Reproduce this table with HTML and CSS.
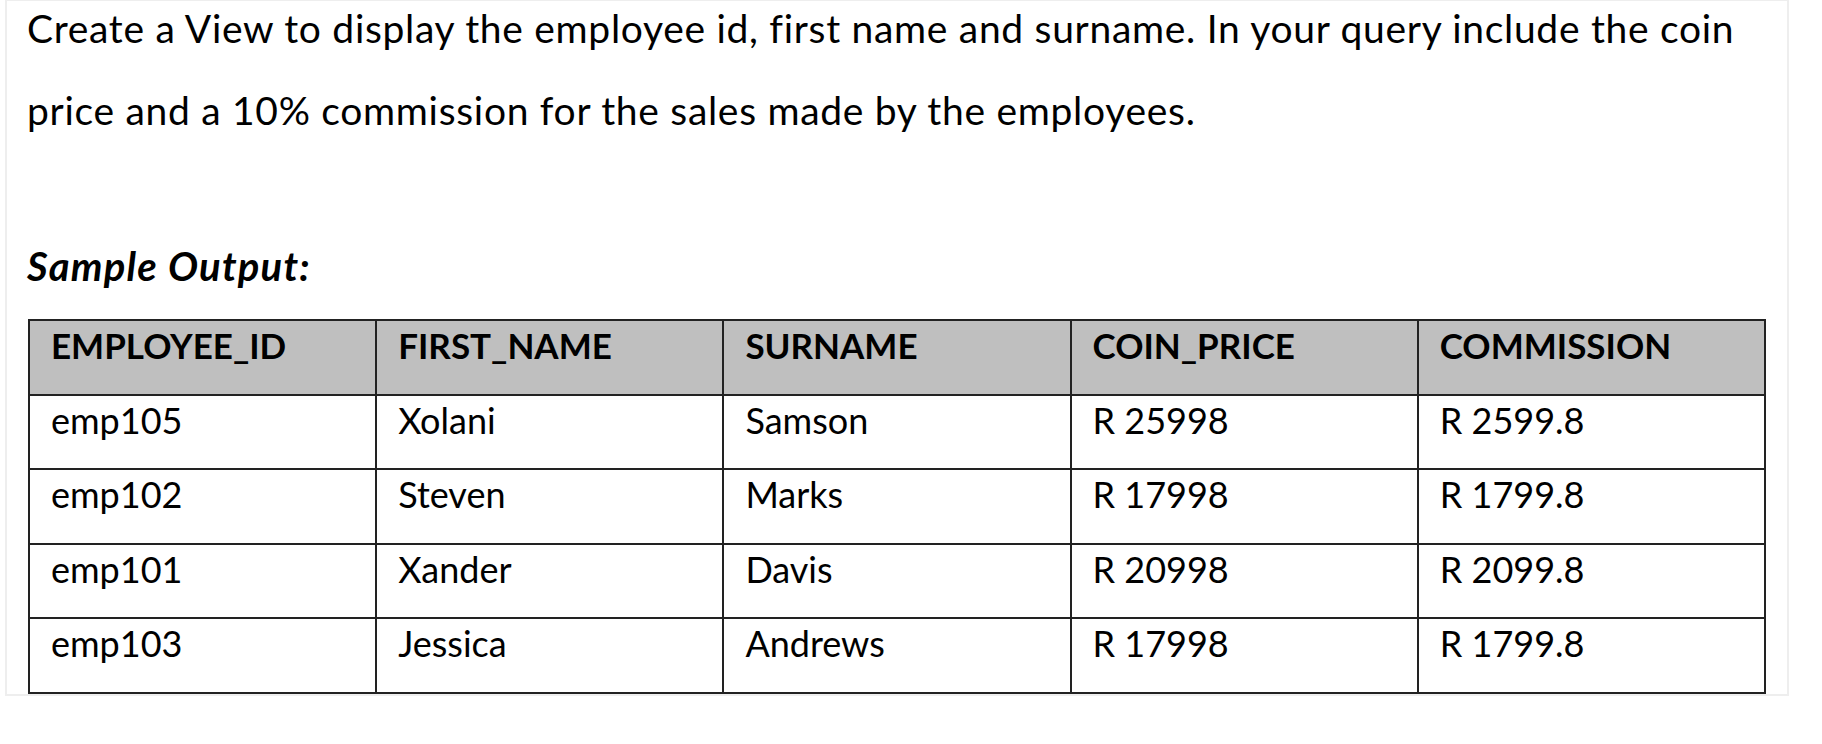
FILE: index.html
```html
<!DOCTYPE html>
<html lang="en">
<head>
<meta charset="utf-8">
<title>Sample Output</title>
<link rel="stylesheet" href="styles.css">
</head>
<body>
<div class="frame">
  <p class="prompt">Create a View to display the employee id, first name and surname. In your query include the coin<br>price and a 10% commission for the sales made by the employees.</p>
  <p class="caption">Sample Output:</p>
  <table class="result">
    <thead>
      <tr><th>EMPLOYEE_ID</th><th>FIRST_NAME</th><th>SURNAME</th><th>COIN_PRICE</th><th>COMMISSION</th></tr>
    </thead>
    <tbody>
      <tr><td>emp105</td><td>Xolani</td><td>Samson</td><td>R 25998</td><td>R 2599.8</td></tr>
      <tr><td>emp102</td><td>Steven</td><td>Marks</td><td>R 17998</td><td>R 1799.8</td></tr>
      <tr><td>emp101</td><td>Xander</td><td>Davis</td><td>R 20998</td><td>R 2099.8</td></tr>
      <tr><td>emp103</td><td>Jessica</td><td>Andrews</td><td>R 17998</td><td>R 1799.8</td></tr>
    </tbody>
  </table>
</div>
</body>
</html>
```
FILE: styles.css
```css
html, body {
  margin: 0;
  padding: 0;
  background: #ffffff;
}
body {
  font-family: Lato, "Liberation Sans", sans-serif;
  color: #000000;
}
.frame {
  margin-left: 5px;
  width: 1784px;
  border: 2px solid #eeeeee;
  border-top-width: 1px;
  padding: 0 0 0 20px;
  box-sizing: border-box;
}
.prompt {
  margin: -14px 0 0;
  font-size: 39px;
  letter-spacing: 0.7px;
  line-height: 82px;
  white-space: nowrap;
}
.caption {
  margin: 91px 0 0;
  font-size: 40px;
  letter-spacing: 1.2px;
  line-height: 48px;
  font-weight: 700;
  font-style: italic;
}
.result {
  margin: 29px 0 0 1px;
  border-collapse: collapse;
  width: 1738px;
  table-layout: fixed;
}
.result th,
.result td {
  border: 2px solid #222222;
  height: 74.6px;
  box-sizing: border-box;
  padding: 3px 0 0 21px;
  vertical-align: top;
  text-align: left;
  font-size: 36px;
  line-height: 43px;
}
.result th {
  background: #bfbfbf;
  font-weight: 700;
  font-size: 35px;
}
.result td {
  font-weight: 400;
}
```
